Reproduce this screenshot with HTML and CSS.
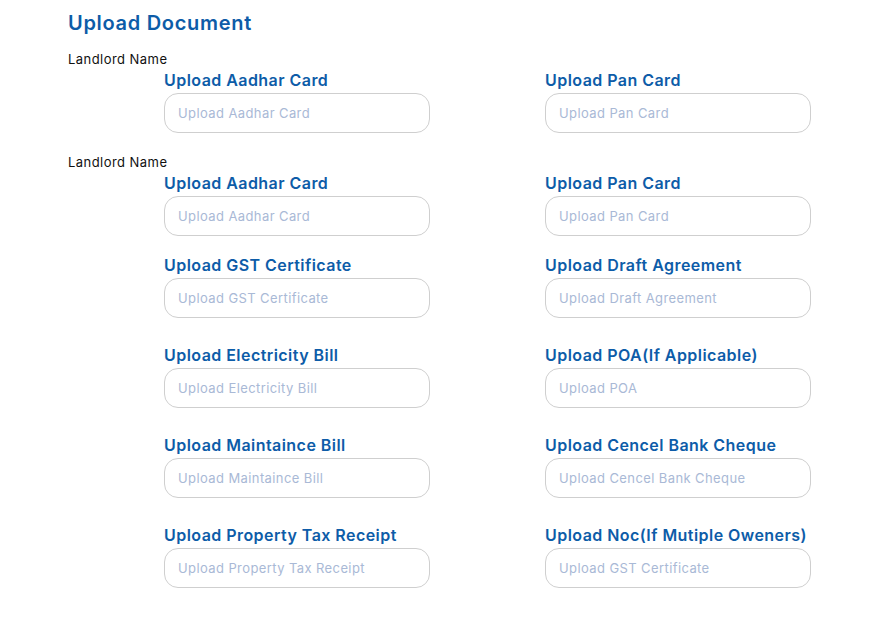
FILE: index.html
```html
<!DOCTYPE html>
<html lang="en">
<head>
<meta charset="utf-8">
<title>Upload Document</title>
<link rel="stylesheet" href="styles.css">
</head>
<body>
<main class="page">
  <h1 class="title">Upload Document</h1>

  <section class="owner">
    <div class="owner-name">Landlord Name</div>
    <div class="grid">
      <div class="field">
        <label class="label">Upload Aadhar Card</label>
        <input class="input" type="text" placeholder="Upload Aadhar Card">
      </div>
      <div class="field">
        <label class="label">Upload Pan Card</label>
        <input class="input" type="text" placeholder="Upload Pan Card">
      </div>
    </div>
  </section>

  <section class="owner owner-second">
    <div class="owner-name">Landlord Name</div>
    <div class="grid grid-first">
      <div class="field">
        <label class="label">Upload Aadhar Card</label>
        <input class="input" type="text" placeholder="Upload Aadhar Card">
      </div>
      <div class="field">
        <label class="label">Upload Pan Card</label>
        <input class="input" type="text" placeholder="Upload Pan Card">
      </div>
    </div>
    <div class="grid grid-rest">
      <div class="field">
        <label class="label">Upload GST Certificate</label>
        <input class="input" type="text" placeholder="Upload GST Certificate">
      </div>
      <div class="field">
        <label class="label">Upload Draft Agreement</label>
        <input class="input" type="text" placeholder="Upload Draft Agreement">
      </div>
      <div class="field">
        <label class="label">Upload Electricity Bill</label>
        <input class="input" type="text" placeholder="Upload Electricity Bill">
      </div>
      <div class="field">
        <label class="label">Upload POA(If Applicable)</label>
        <input class="input" type="text" placeholder="Upload POA">
      </div>
      <div class="field">
        <label class="label">Upload Maintaince Bill</label>
        <input class="input" type="text" placeholder="Upload Maintaince Bill">
      </div>
      <div class="field">
        <label class="label">Upload Cencel Bank Cheque</label>
        <input class="input" type="text" placeholder="Upload Cencel Bank Cheque">
      </div>
      <div class="field">
        <label class="label">Upload Property Tax Receipt</label>
        <input class="input" type="text" placeholder="Upload Property Tax Receipt">
      </div>
      <div class="field">
        <label class="label">Upload Noc(If Mutiple Oweners)</label>
        <input class="input" type="text" placeholder="Upload GST Certificate">
      </div>
    </div>
  </section>
</main>
</body>
</html>
```

FILE: styles.css
```css
* { box-sizing: border-box; }

html, body {
  margin: 0;
  padding: 0;
  background: #ffffff;
}

body {
  font-family: Inter, "Open Sans", "Liberation Sans", sans-serif;
  color: #000;
}

.page {
  padding: 9px 0 0 68px;
}

.title {
  margin: 0;
  font-size: 20px;
  line-height: 28px;
  font-weight: 600;
  letter-spacing: 0.7px;
  color: #0d5ca8;
}

.owner {
  margin-top: 13px;
}

.owner-second {
  margin-top: 20px;
}

.owner-name {
  font-size: 13px;
  line-height: 18px;
  font-weight: 400;
  letter-spacing: 0.45px;
  color: #111;
}

.grid {
  display: grid;
  grid-template-columns: 266px 266px;
  column-gap: 115px;
  margin-left: 96px;
}

.grid-first {
  margin-bottom: 17px;
}

.grid-rest {
  row-gap: 25px;
}

.field {
  display: flex;
  flex-direction: column;
  gap: 1px;
}

.label {
  font-size: 16px;
  line-height: 24px;
  font-weight: 600;
  letter-spacing: 0.45px;
  color: #0d5ca8;
  white-space: nowrap;
}

.input {
  width: 266px;
  height: 40px;
  border: 1px solid #cfcfcf;
  border-radius: 14px;
  padding: 0 13px;
  font-family: inherit;
  font-size: 13px;
  letter-spacing: 0.4px;
  color: #333;
  background: #fff;
  outline: none;
}

.input::placeholder {
  color: #a9b9d6;
}
```
